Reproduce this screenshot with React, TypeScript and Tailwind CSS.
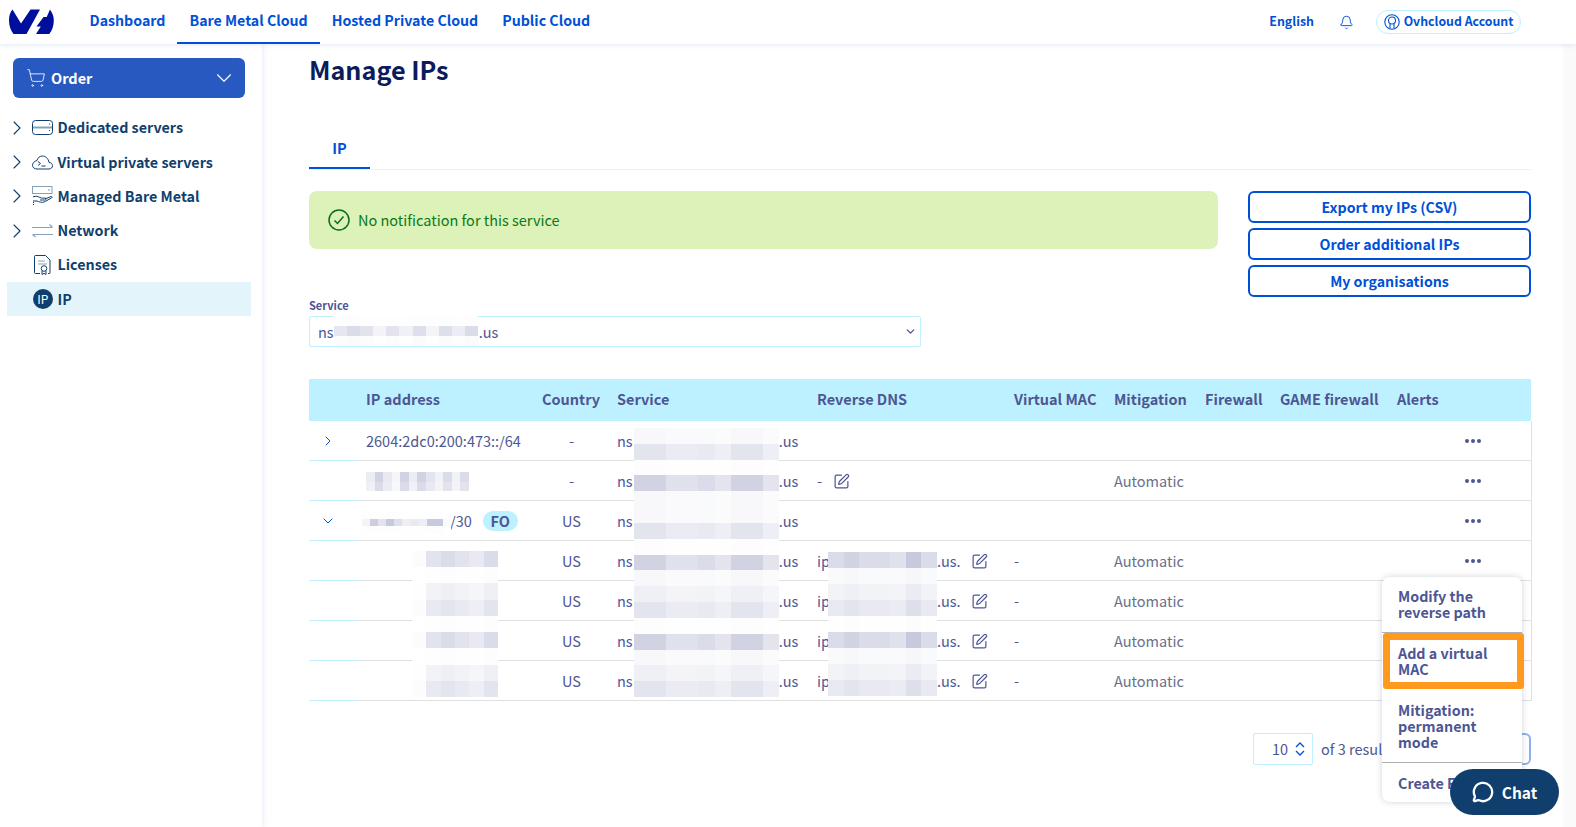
import { Bell, ChevronDown, ChevronRight, MessageCircle, ShoppingCart, SquarePen } from "lucide-react";

const navLinks = ["Dashboard", "Bare Metal Cloud", "Hosted Private Cloud", "Public Cloud"];

// tint rows of the blurred-out bits, alpha of the table text colour
const D = 0.26;
const M = 0.16;
const L = 0.09;
const F = 0.04;
const W = 0.012;

function Patch({ bands, blocks, className, weights }: { bands: number[]; blocks: number; className: string; weights?: number[] }) {
  return (
    <div className={`absolute flex flex-col bg-white ${className}`}>
      {bands.map((a, r) => (
        <div key={r} className="flex flex-1">
          {Array.from({ length: blocks }).map((_, c) => {
            const w = weights ? weights[c % weights.length] : 1;
            return <div key={c} className="flex-1" style={{ background: `rgba(77,86,147,${a * w})` }} />;
          })}
        </div>
      ))}
    </div>
  );
}

function SideIcon({ name }: { name: string }) {
  const c = "#113f6d";
  const l = "#8aa0b8";
  if (name === "server")
    return (
      <svg width="21" height="15" viewBox="0 0 21 15" fill="none" strokeWidth="1">
        <rect x="0.5" y="0.5" width="20" height="14" rx="3" stroke={c} />
        <path d="M1 7.5h19" stroke={l} strokeWidth="2" />
        <path d="M17.5 3.5v1M17.5 10v1" stroke={c} />
      </svg>
    );
  if (name === "cloud")
    return (
      <svg width="21" height="15" viewBox="0 0 21 15" fill="none" stroke={c} strokeWidth="1">
        <path d="M5 14h12c2 0 3.5-1.5 3.5-3.3S19 7.500 17 7.500C16.500 3.500 13.500 1 10.500 1 7.500 1 5.500 3 5 5.500 2.500 6 .5 8 .5 10.300.5 12.500 2.500 14 5 14z" />
        <path d="M6 6.500l2.500 2L6 10.500M9.500 11h4" />
      </svg>
    );
  if (name === "managed")
    return (
      <svg width="21" height="20" viewBox="0 0 21 20" fill="none" stroke={c} strokeWidth="1">
        <rect x="0.500" y="0.500" width="19.500" height="7" stroke={l} />
        <path d="M17 3.500v1" />
        <path d="M1 11c3-1.500 5-.5 7 .5 2 1 4 .5 5 .5 1.500 0 1.500 2-.5 2H8M13 13l6-2.500c1-.3 1.500 1 .5 1.500L12 16c-2 .8-5 0-7-1H1" />
        <path d="M1 18.500h1M1 16.500h1" />
      </svg>
    );
  if (name === "network")
    return (
      <svg width="21" height="15" viewBox="0 0 21 15" fill="none" strokeWidth="1.200" stroke={l}>
        <path d="M0 4.500h20M17.500 1.500l3 3" />
        <path d="M21 11.500H1M3.500 14l-3-2.500" />
      </svg>
    );
  if (name === "license")
    return (
      <svg width="17" height="20" viewBox="0 0 17 20" fill="none" stroke={c} strokeWidth="1">
        <path d="M6 18.500H1.500a1 1 0 0 1-1-1v-16a1 1 0 0 1 1-1h10l4.500 4.500v13a.5.500 0 0 1-.5.500H14" />
        <path d="M4 6h7M4 9h9" stroke={l} />
        <circle cx="10" cy="13.500" r="2.800" />
        <path d="M8 16v3.500l2-1.200 2 1.200V16" />
      </svg>
    );
  return (
    <span className="flex h-[20px] w-[20px] items-center justify-center rounded-full bg-[#113f6d] text-[12px] font-normal leading-none text-white">IP</span>
  );
}

const sideItems = [
  { label: "Dedicated servers", icon: "server", arrow: true },
  { label: "Virtual private servers", icon: "cloud", arrow: true },
  { label: "Managed Bare Metal", icon: "managed", arrow: true },
  { label: "Network", icon: "network", arrow: true },
  { label: "Licenses", icon: "license", arrow: false },
  { label: "IP", icon: "ip", arrow: false, active: true },
];

const headers = ["", "IP address", "Country", "Service", "Reverse DNS", "Virtual MAC", "Mitigation", "Firewall", "GAME firewall", "Alerts", ""];

function ServiceCell() {
  return (
    <span className="whitespace-nowrap">
      ns<span className="inline-block w-[146px]" />.us
    </span>
  );
}

function Dns({ ip }: { ip?: boolean }) {
  return (
    <span className="flex items-center whitespace-nowrap">
      {ip ? (
        <>
          ip<span className="inline-block w-[107px]" />.us.
          <SquarePen size={17} strokeWidth={1.7} className="ml-[10px]" />
        </>
      ) : (
        <>
          -<SquarePen size={17} strokeWidth={1.7} className="ml-[11px]" />
        </>
      )}
    </span>
  );
}

const rows = [
  { arrow: "right", ip: "2604:2dc0:200:473::/64", country: "-" },
  { ip: "", country: "-", dns: "dash", mitigation: true },
  { arrow: "down", ip: "/30", fo: true, country: "US" },
  { ip: "", country: "US", dns: "ip", mac: true, mitigation: true },
  { ip: "", country: "US", dns: "ip", mac: true, mitigation: true },
  { ip: "", country: "US", dns: "ip", mac: true, mitigation: true },
  { ip: "", country: "US", dns: "ip", mac: true, mitigation: true },
];

export default function App() {
  return (
    <div className="relative flex h-screen flex-col overflow-hidden bg-white font-['Noto_Sans_CJK_SC','Noto_Sans',sans-serif] text-[14.5px] leading-[20px] text-[#4d5693]">
      {/* Top bar */}
      <header className="relative z-20 flex h-[44px] shrink-0 items-stretch bg-white pl-[9px] pr-[55px] shadow-[0_1px_5px_rgba(90,110,190,0.16)]">
        <svg width="45" height="26" viewBox="0 0 45 26" className="mt-[9px]" fill="#000e9c">
          <path d="M3.500.5C1 3.500 0 7 0 11.500c0 5 1.500 9.500 4.500 13.500h13L31 .5H21.500L12 14.500z" />
          <path d="M41 .5c2.500 3.500 3.800 7 3.800 11 0 5-1.500 9.500-4.500 13.500H27l4.800-7.500H27.500l7-9.500h3.200z" />
        </svg>
        <nav className="ml-[23.500px] flex items-stretch text-[14.2px] font-semibold text-[#0050d7]">
          {navLinks.map((n, i) => (
            <a key={n} className={`flex items-center border-b-2 px-[12px] pb-[2px] ${i === 1 ? "border-[#0050d7]" : "border-transparent"}`}>
              {n}
            </a>
          ))}
        </nav>
        <div className="ml-auto flex items-center text-[#0050d7]">
          <span className="pb-[2px] text-[12.4px] font-semibold">English</span>
          <Bell size={15} strokeWidth={1.5} className="ml-[25px]" />
          <span className="ml-[22px] flex h-[24px] w-[145px] items-center justify-center gap-[4px] whitespace-nowrap rounded-full border border-[#bef1ff] text-[12.3px] font-semibold">
            <svg width="16" height="16" viewBox="0 0 16 16" fill="none" stroke="#0050d7" strokeWidth="1.100">
              <circle cx="8" cy="8" r="7.200" />
              <circle cx="8" cy="6.500" r="3.500" />
              <path d="M6 10v4.500M10 10v4.500" />
            </svg>
            <span className="pb-[2px]">Ovhcloud Account</span>
          </span>
        </div>
      </header>

      <div className="flex min-h-0 flex-1">
        {/* Sidebar */}
        <aside className="z-10 w-[262px] shrink-0 bg-white pl-[7px] pt-[14px] shadow-[1px_0_5px_rgba(90,110,190,0.14)]">
          <button className="ml-[6px] flex h-[40px] w-[232px] items-center rounded-[6px] bg-[#2859c0] pl-[13px] pr-[8px] font-semibold text-white">
            <ShoppingCart size={20} strokeWidth={1} />
            <span className="ml-[5px]">Order</span>
            <ChevronDown size={26} strokeWidth={1} className="ml-auto" />
          </button>
          <ul className="mt-[12.600px] w-[244px] font-bold text-[#113f6d]">
            {sideItems.map((s) => (
              <li key={s.label} className={`flex h-[34.300px] items-center ${s.active ? "bg-[#e4f4fb]" : ""}`}>
                <span className="flex w-[25px] justify-center">
                  {s.arrow && <ChevronRight size={24} strokeWidth={1.100} className="ml-[-5px]" />}
                </span>
                <span className="flex w-[25.500px] justify-center pr-[4px]">
                  <SideIcon name={s.icon} />
                </span>
                <span className="pb-[1px] text-[14.3px]">{s.label}</span>
              </li>
            ))}
          </ul>
        </aside>

        {/* Main */}
        <main className="relative min-w-0 flex-1 pl-[47px] pr-[45px]">
          <h1 className="mt-[7px] text-[25.200px] font-bold leading-[36px] text-[#0b1c5c]">Manage IPs</h1>

          <div className="mt-[45px] flex h-[38px] border-b border-[#e6f5fc]">
            <span className="flex w-[61px] items-center justify-center border-b-2 border-[#0050d7] pb-[4px] font-semibold text-[#0050d7]">IP</span>
          </div>

          <div className="mt-[21px] flex items-start gap-[30px]">
            <div className="flex h-[58px] w-[909px] shrink-0 items-center rounded-[8px] bg-[#dcf2b8] pl-[19px] text-[#0a7a16]">
              <svg width="22" height="22" viewBox="0 0 22 22" fill="none" stroke="#0a6b26" strokeWidth="1.500">
                <circle cx="11" cy="11" r="10" />
                <path d="M6.500 11.500l3 3 6-7" />
              </svg>
              <span className="ml-[8px]">No notification for this service</span>
            </div>
            <div className="flex w-[283px] flex-col gap-[5px] text-[14.2px] font-semibold text-[#0050d7]">
              {["Export my IPs (CSV)", "Order additional IPs", "My organisations"].map((b) => (
                <button key={b} className="h-[32px] rounded-[6px] border-2 border-[#0050d7]">
                  {b}
                </button>
              ))}
            </div>
          </div>

          {/* Service select */}
          <label className="block text-[11px] font-bold leading-[16px]">Service</label>
          <div className="relative mt-[3px] flex h-[31px] w-[612px] items-center rounded-[2px] border border-[#bef1ff] pl-[8px] pr-[2px]">
            ns<span className="inline-block w-[145px]" />.us
            <ChevronDown size={13} strokeWidth={2.500} className="ml-auto mr-[1px]" />
            <Patch bands={[W, D * 0.8, W * 2]} blocks={11} weights={[0.7, 1, 0.8, 0.3, 0.8, 0.4, 0.9, 0.3, 0.9, 0.5, 1]} className="left-[24px] top-[-1px] h-[30px] w-[144px]" />
          </div>

          {/* IP table */}
          <div className="relative mt-[32px]">
            <table className="w-full table-fixed border-collapse">
              <colgroup>
                <col className="w-[49px]" />
                <col className="w-[176px]" />
                <col className="w-[75px]" />
                <col className="w-[200px]" />
                <col className="w-[197px]" />
                <col className="w-[100px]" />
                <col className="w-[91px]" />
                <col className="w-[75px]" />
                <col className="w-[117px]" />
                <col className="w-[66px]" />
                <col className="w-[76px]" />
              </colgroup>
              <thead>
                <tr className="h-[42px] bg-[#bef1ff] font-bold">
                  {headers.map((h, i) => (
                    <th key={i} className="whitespace-nowrap px-[8px] pb-[3px] text-left font-bold">
                      {h}
                    </th>
                  ))}
                </tr>
              </thead>
              <tbody>
                {rows.map((r, i) => (
                  <tr key={i} className={i === 0 ? "h-[39px]" : "h-[40px]"}>
                    <td className="border-b border-[#bef1ff] pl-[11px] pt-[1px] text-[#0050d7]">
                      {r.arrow === "right" && <ChevronRight size={16} strokeWidth={1.500} />}
                      {r.arrow === "down" && <ChevronDown size={16} strokeWidth={1.500} />}
                    </td>
                    <td className="whitespace-nowrap border-b border-[#e0e0e0] px-[8px] pt-[2px]">
                      {r.arrow === "down" ? (
                        <span className="flex items-center">
                          <span className="inline-block w-[84px]" />
                          /30
                          <span className="ml-[11px] flex h-[20px] w-[35px] items-center justify-center rounded-full bg-[#bef1ff] font-semibold">FO</span>
                        </span>
                      ) : (
                        r.ip
                      )}
                    </td>
                    <td className="border-b border-[#e0e0e0] px-[8px] pt-[2px] text-center">{r.country}</td>
                    <td className="border-b border-[#e0e0e0] px-[8px] pt-[2px]"><ServiceCell /></td>
                    <td className="border-b border-[#e0e0e0] px-[8px] pt-[2px]">
                      {r.dns === "ip" && <Dns ip />}
                      {r.dns === "dash" && <Dns />}
                    </td>
                    <td className="border-b border-[#e0e0e0] px-[8px] pt-[2px]">{r.mac ? "-" : ""}</td>
                    <td className="border-b border-[#e0e0e0] px-[8px] pt-[2px] text-[#6a7088]">{r.mitigation ? "Automatic" : ""}</td>
                    <td className="border-b border-[#e0e0e0]" />
                    <td className="border-b border-[#e0e0e0]" />
                    <td className="border-b border-[#e0e0e0]" />
                    <td className="border-b border-r border-[#e0e0e0] pl-[10px] pt-[2px]">
                      <span className="flex gap-[2px]">
                        <i className="h-[4px] w-[4px] rounded-full bg-[#4d5693]" />
                        <i className="h-[4px] w-[4px] rounded-full bg-[#4d5693]" />
                        <i className="h-[4px] w-[4px] rounded-full bg-[#4d5693]" />
                      </span>
                    </td>
                  </tr>
                ))}
              </tbody>
            </table>

            {/* blurred hostnames and addresses */}
            <Patch bands={[F, M, W, D, F, F, M, W, D, F, L, M, W, D, F, L, M]} blocks={9} weights={[1, 1, 0.7, 0.7, 0.8, 0.6, 1, 1, 0.6]} className="left-[325px] top-[49px] h-[269px] w-[145px]" />
            <Patch bands={[D, F, L, M, W, D, F, L, M]} blocks={7} weights={[0.8, 1, 0.8, 0.8, 0.7, 1.2, 0.8]} className="left-[519px] top-[173px] h-[144px] w-[109px]" />
            <Patch bands={[D * 0.8, W, L, M, W, D * 0.8, W, L, M]} blocks={6} weights={[0.1, 0.8, 1, 0.8, 0.6, 1]} className="left-[103px] top-[172px] h-[146px] w-[86px]" />
            <Patch bands={[D, D * 0.8]} blocks={12} weights={[0.4, 1, 0.5, 0.2, 1, 0.4, 1, 0.6, 0.3, 0.8, 0.3, 0.8]} className="left-[57px] top-[93px] h-[19px] w-[103px]" />
            <Patch bands={[W, D * 1.2, W]} blocks={11} weights={[0.2, 0.9, 0.5, 1, 0.6, 0.3, 0.4, 0.3, 1, 1, 0.1]} className="left-[53px] top-[132px] h-[23px] w-[89px]" />

            {/* Pagination */}
            <div className="mt-[32px] flex items-center justify-end">
              <span className="flex h-[32px] w-[60px] items-center justify-end rounded-[2px] border border-[#bef1ff] pr-[7px]">
                10
                <svg width="10" height="14" viewBox="0 0 10 14" fill="none" stroke="#0050d7" strokeWidth="1.300" className="ml-[7px]">
                  <path d="M1 5l4-4 4 4M1 9l4 4 4-4" />
                </svg>
              </span>
              <span className="ml-[8px] w-[90px] whitespace-nowrap">of 3 results</span>
              <span className="ml-[60px] h-[32px] w-[60px] rounded-[6px] border-2 border-[#8fb0ee]" />
            </div>

            {/* Row actions menu */}
            <div className="absolute right-[9px] top-[198px] w-[140px] rounded-[8px] bg-white text-[14.3px] font-semibold shadow-[0_0_6px_rgba(40,50,110,0.22)]">
              <div className="border-b border-[#b0b0b0] px-[16px] pb-[12px] pt-[11px] leading-[16px]">Modify the<br />reverse path</div>
              <div className="ml-[1px] mr-[-2px] rounded-[3px] border-[7px] border-[#ff9a1f] px-[8px] py-[5px] leading-[16px]">Add a virtual<br />MAC</div>
              <div className="border-b border-[#b0b0b0] px-[16px] pb-[12px] pt-[13px] leading-[16px]">Mitigation:<br />permanent<br />mode</div>
              <div className="h-[39px] overflow-hidden whitespace-nowrap px-[16px] pt-[12px] leading-[16px]">Create Firewall</div>
            </div>
          </div>
        </main>
      </div>

      {/* faint gutter on the right edge */}
      <div className="absolute bottom-0 right-0 top-[44px] w-[13px] bg-[#fafafa]" />

      <button className="absolute bottom-[12px] right-[17px] z-30 flex h-[46px] w-[109px] items-center justify-center gap-[8px] rounded-full bg-[#113f6d] text-[15.5px] font-bold text-white">
        <MessageCircle size={22} strokeWidth={2.500} />
        Chat
      </button>
    </div>
  );
}
